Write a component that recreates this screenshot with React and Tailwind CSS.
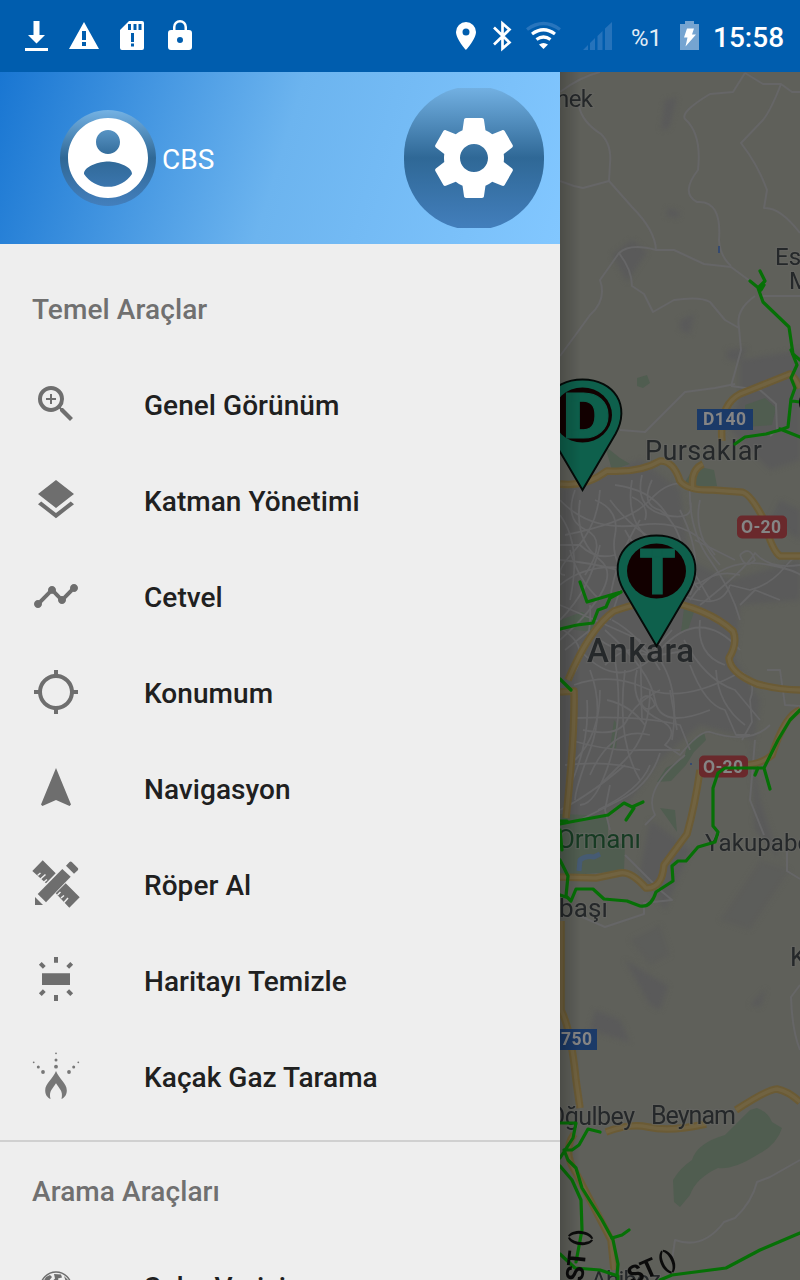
import { MdZoomIn, MdLayers, MdTimeline, MdLocationSearching, MdNavigation } from "react-icons/md";

const StatusIcon = ({ box, className, children }) => (
  <svg viewBox={box} className={"shrink-0 fill-white " + className}>{children}</svg>
);

function StatusBar() {
  return (
    <header className="flex h-[72px] shrink-0 items-center bg-[#005dae] pl-3 text-white">
      <StatusIcon box="12 12 48 48" className="size-12">
        <path d="M33.500 21h6v14h5.500L36.500 43.500 28 35h5.500zM25 48h23v3H25z" />
      </StatusIcon>
      <StatusIcon box="60 12 48 48" className="size-12">
        <path fillRule="evenodd" d="M84 22l15 27H69zM82 31v9h4v-9zM82 42v4h4v-4z" />
      </StatusIcon>
      <StatusIcon box="108 12 48 48" className="size-12">
        <path fillRule="evenodd" d="M129 21h13q2 0 2 2v25q0 2-2 2h-20q-2 0-2-2V30zM128 24v6h3v-6zM133.500 24v6h3v-6zM138.500 24v6h3v-6zM131 33v9h3v-9zM131 43.500v3h3v-3z" />
      </StatusIcon>
      <StatusIcon box="156 12 48 48" className="size-12">
        <path fillRule="evenodd" d="M173 30v-3a7 7 0 0 1 14 0v3h2q3 0 3 3v14q0 3-3 3h-18q-3 0-3-3V33q0-3 3-3zM175.500 30h9v-3a4.500 4.500 0 0 0-9 0zM180 37a3 3 0 1 0 0 6 3 3 0 0 0 0-6z" />
      </StatusIcon>
      <div className="ml-auto flex items-center">
        <StatusIcon box="448 18 36 36" className="size-9">
          <path fillRule="evenodd" d="M466 22a10 10 0 0 1 10 10c0 7-10 18-10 18s-10-11-10-18a10 10 0 0 1 10-10zM466 28.500a3.500 3.500 0 1 0 0 7 3.500 3.500 0 0 0 0-7z" />
        </StatusIcon>
        <StatusIcon box="484 18 36 36" className="size-9">
          <path d="M494 27.500l15.500 15-7 6V23.500l7 6-15.500 15" fill="none" stroke="white" strokeWidth="2.700" />
        </StatusIcon>
        <StatusIcon box="520 12 48 48" className="size-12">
          <g fill="none" strokeWidth="3.300">
            <path d="M527 29.500q16.500-12 33 0" stroke="#2875bd" />
            <path d="M532 34q11.500-8.500 23 0M536.500 39.500q7-5 14 0" stroke="white" />
          </g>
          <path d="M539 44.500q4.500-3 9 0l-4.500 4.500z" />
        </StatusIcon>
        <StatusIcon box="568 12 60 48" className="h-12 w-[60px]">
          <path d="M583 50l5-5v5zM590 43l5-5v12h-5zM597.500 36l5-5v19h-5zM605 28.500l7-6.500v28h-7z" fill="#2673bb" />
        </StatusIcon>
        <span className="w-[43px] pt-[3px] pl-[3px] text-2xl font-normal text-[#e2edf6]">%1</span>
        <StatusIcon box="671 18 36 36" className="size-9">
          <path d="M680 24h5v-3h9v3h5v26h-19z" fill="#75a4d1" />
          <path d="M687 28.500h7l-2 6h4L685.500 46.500l2-9H684z" />
        </StatusIcon>
        <span className="w-[93px] pt-[3px] pl-1.5 text-[28px] font-medium">15:58</span>
      </div>
    </header>
  );
}

function Profile() {
  return (
    <div className="flex h-[172px] items-center bg-[linear-gradient(107deg,#1976d2_0%,#6cb4ef_50%,#82c7ff_100%)] pr-4 pl-[60px]">
      <div className="size-24 rounded-full bg-[linear-gradient(180deg,#74b2e4,#2f6896_50%,#437fbd)]">
        <svg viewBox="0 0 24 24" className="size-24 fill-white">
          <path d="M12 2C6.480 2 2 6.480 2 12s4.480 10 10 10 10-4.480 10-10S17.520 2 12 2zm0 3c1.660 0 3 1.340 3 3s-1.340 3-3 3-3-1.340-3-3 1.340-3 3-3zm0 14.200c-2.500 0-4.710-1.280-6-3.220.030-1.990 4-3.080 6-3.080 1.990 0 5.970 1.090 6 3.080-1.290 1.940-3.500 3.220-6 3.220z" />
        </svg>
      </div>
      <span className="ml-1.5 pt-1 text-[28px] font-normal text-white">CBS</span>
      <div className="ml-auto h-[140px] w-[140px] overflow-hidden">
        <div className="-mt-0.5 flex h-36 w-[140px] items-center justify-center rounded-full bg-[linear-gradient(180deg,#74b2e4,#2f6896_50%,#437fbd)]">
          <svg viewBox="0 0 24 24" className="size-24 fill-white">
            <path d="M19.430 12.980c.040-.320.070-.640.070-.980s-.030-.660-.070-.980l2.110-1.650c.190-.150.240-.420.120-.640l-2-3.460c-.120-.220-.390-.300-.610-.220l-2.490 1c-.520-.400-1.080-.730-1.690-.980l-.380-2.650C14.460 2.180 14.250 2 14 2h-4c-.250 0-.460.180-.490.420l-.380 2.650c-.610.250-1.170.590-1.690.980l-2.490-1c-.230-.090-.490 0-.610.220l-2 3.460c-.130.220-.070.490.120.640l2.110 1.650c-.040.320-.070.650-.070.980s.030.660.070.980l-2.110 1.650c-.190.150-.240.420-.120.640l2 3.460c.120.220.390.300.610.220l2.490-1c.520.400 1.080.730 1.690.980l.380 2.650c.030.240.240.420.490.420h4c.250 0 .460-.180.490-.420l.380-2.650c.610-.250 1.170-.590 1.690-.980l2.490 1c.230.090.490 0 .610-.220l2-3.460c.120-.220.070-.490-.120-.640l-2.110-1.650zM12 15.500c-1.930 0-3.500-1.570-3.500-3.500s1.570-3.500 3.500-3.500 3.500 1.570 3.500 3.500-1.570 3.500-3.500 3.500z" />
          </svg>
        </div>
      </div>
    </div>
  );
}

const PencilRuler = () => (
  <svg viewBox="32 860 48 48" className="size-12 fill-current">
    <path d="M32.300 871L42.700 860.300 55.700 873.300 46 883.300zM65.700 883.300L79.700 897.300 69.300 907.700 55.700 893.300z" />
    <path d="M37.500 875.500l3-2.500M40.500 879l5-4.500M44 882l3-2.500M57.500 895l3-3M61 898l3-2.500M64 902.500l4-4.500" stroke="#eee" strokeWidth="1.500" />
    <path d="M62.300 869L70.700 876.700 46 902.300 37.700 894z" />
    <path d="M66 865.700L69.500 862q1.200-1 2.300 0L77.800 868q1 1 0 2.200L74 873.700zM35 897v8h8z" />
  </svg>
);

const ClearMap = () => (
  <svg viewBox="32 956 48 48" className="size-12 fill-current">
    <path d="M42 973.300h28V985H42zM54 957h4v5.800h-4zM54 995h4v6h-4z" />
    <path d="M40.300 963.300l4 4M71.700 963.300l-4 4M40.300 994.700l4-4M71.700 994.700l-4-4" stroke="currentColor" strokeWidth="4" />
  </svg>
);

const GasLeak = () => (
  <svg viewBox="32 1052 48 48" className="size-12 fill-[#777]">
    <path d="M56 1071C53 1079 45.200 1083 45.200 1090.500 45.200 1095 47.500 1097.500 50.500 1099 48.500 1091 53 1088.500 56 1083.300 59 1088.500 63.500 1091 61.500 1099 64.500 1097.500 66.800 1095 66.800 1090.500 66.800 1083 59 1079 56 1071z" />
    <circle cx="56" cy="1066.700" r="1.900" /><circle cx="56" cy="1060" r="1.500" /><circle cx="56" cy="1053.300" r=".9" />
    <circle cx="43" cy="1072" r="1.900" /><circle cx="38.300" cy="1067" r="1.500" /><circle cx="33.700" cy="1062.300" r=".9" />
    <circle cx="69" cy="1072" r="1.900" /><circle cx="73.700" cy="1067" r="1.500" /><circle cx="78.300" cy="1062.300" r=".9" />
  </svg>
);

const Globe = () => (
  <svg viewBox="0 0 48 48" className="size-12">
    <circle cx="24" cy="25.500" r="15.500" fill="none" stroke="currentColor" strokeWidth="1.500" />
    <path d="M11 20l3-5 4-2 2 2-4 5-4 2zM22 12l7 .5 1 3-4 1 1 4-5 7-5-3 3-5 3-3zM32 14l5 5 1 5-4-4z" fill="currentColor" />
  </svg>
);

const tools = [
  ["Genel Görünüm", MdZoomIn],
  ["Katman Yönetimi", MdLayers],
  ["Cetvel", MdTimeline],
  ["Konumum", MdLocationSearching],
  ["Navigasyon", MdNavigation],
  ["Röper Al", PencilRuler],
  ["Haritayı Temizle", ClearMap],
  ["Kaçak Gaz Tarama", GasLeak],
];

const MenuItem = ({ label, icon: Icon }) => (
  <li className="flex h-24 shrink-0 items-center gap-16 px-8 text-[#6e6e6e]">
    <Icon className="size-12" />
    <span className="pt-[3px] text-[28px] font-medium tracking-[0.05px] text-[#202020]">{label}</span>
  </li>
);

const Heading = ({ children }) => (
  <h2 className="flex h-24 items-center px-8 pt-1 text-[28px] font-medium tracking-[0.1px] text-[#707070]">{children}</h2>
);

const yellowRoads = [
  "M560 484Q586 487 607 471 640 473 660 461 673 460 680 481 688 491 713 490L740 492Q749 491 763 518 772 551 780 556H800",
  "M693 490Q690 470 703 464M722 441Q719 405 740 394L790 374Q796 378 800 388",
  "M568 680Q590 628 614 611 640 602 660 600 708 608 733 631 738 643 729 658 730 673 757 684 780 690 800 690",
  "M560 692L574 691Q575 735 566 818",
  "M800 710Q785 715 772 755 762 764 745 765M700 770Q695 805 687 834L664 865Q662 889 646 888 631 871 620 873L596 878 560 877",
  "M561 921V1010Q571 1030 576 1080L580 1108",
  "M606 1132Q630 1123 648 1127 670 1132 706 1124M736 1110Q768 1089 777 1089 788 1091 800 1102",
  "M574 1134Q562 1152 576 1173L611 1240 614 1270",
];

const countryRoads = [
  "M560 92Q580 77 600 72M579 106Q582 122 601 134 612 145 610 164L609 181 632 207Q655 230 656 250M560 181L574 186 583 188 609 181",
  "M560 356Q580 329 590 315 607 300 600 280L619 253Q630 243 656 250L674 250 704 264 731 267 750 281",
  "M619 253Q632 270 632 286L644 294 653 312 674 300Q700 296 710 302L725 320 739 328Q735 310 755 296",
  "M745 73L733 92 710 94Q680 112 685 119 702 134 698 170 680 193 697 202 722 200 719 240 720 256 731 266",
  "M745 73L763 84 781 84Q771 110 763 120L741 143Q758 165 767 190L764 208Q780 207 800 233M781 84L792 92 800 92",
  "M761 296H800M739 328L741 350 735 372 731 386M620 430L645 432 685 392 715 388 735 384M731 386L760 390 776 404 777 430 770 436",
  "M625 855L660 890 672 900 644 903 644 914 605 927 580 916M755 740L750 800 764 835M787 850V871L800 879",
  "M800 985L791 997Q792 1030 800 1050M800 1160L770 1177 757 1182Q752 1202 735 1218L724 1222Q703 1250 675 1240L672 1260",
];

const cityStreets = [
  "M560 500Q590 532 640 525T715 555M565 535Q630 522 650 500T690 485M560 560Q620 565 670 590T730 585",
  "M580 500Q574 540 600 560T560 640M600 490Q598 525 575 550T565 575M632 480Q625 520 650 540T660 570M642 475Q634 508 665 515T690 500",
  "M615 485Q655 490 670 520M652 480Q640 505 660 510 680 525 685 560M690 485Q688 530 710 560T740 620",
  "M560 585Q590 560 640 570M560 605Q600 622 640 640M690 600Q720 555 770 565T800 590M700 605Q745 570 755 553 770 570 800 565",
  "M730 585L750 590Q770 585 785 567T800 560M640 520Q615 560 610 600M570 550Q578 580 600 600M670 540Q688 560 710 600M695 540L735 560",
  "M580 650Q620 695 660 650T740 650M605 630Q650 670 655 700T710 710M590 670Q605 710 590 750T575 800M615 660Q624 715 610 760T580 805",
  "M574 685Q610 672 645 688T735 675M576 718Q640 715 680 725L690 750M570 740Q610 752 640 750H680M565 765Q610 760 640 770",
  "M637 670Q628 705 660 720 680 730 665 745L680 755Q700 730 710 732 750 745 770 725M650 690Q650 735 625 760L600 785M670 690L677 730",
  "M690 665Q705 705 725 710L736 735 750 735M716 670Q718 705 745 725M738 670Q758 680 750 700L752 722 742 740M767 670L780 670 785 705 800 706",
  "M660 753Q650 785 620 800L580 820M560 810Q590 795 625 765M685 755Q642 790 655 815L645 825M610 785L605 810 610 830",
  "M600 640Q620 655 660 655L690 650M612 620Q640 635 660 670M605 665Q630 640 650 655L672 630M700 620Q696 655 725 665M640 640L642 720",
  "M625 670Q616 740 640 780M660 660Q680 690 672 740M600 690Q600 735 575 760M587 700Q590 745 568 790M560 515Q582 545 570 600",
  "M610 500Q640 540 680 550M600 545Q590 590 560 620M625 530Q640 560 670 560M650 545L690 580M680 510Q705 560 690 595M700 500Q692 535 720 565",
  "M640 700Q645 715 655 705 650 690 640 700M740 555Q750 545 755 560 745 570 740 555M620 590L610 620M590 605Q592 635 580 660",
  "M575 490Q564 520 586 530T585 575M560 545H580Q595 560 615 555M595 500Q620 510 615 535T630 580M620 555L650 580 668 600M632 497Q650 505 645 520",
  "M590 775Q612 725 650 735M598 810Q640 790 650 765M583 730Q618 738 627 720T660 690M607 700Q630 705 645 725M684 640Q705 680 735 690L760 720",
  "M670 575Q690 590 705 580T740 575M672 560L700 590M560 628Q590 645 575 672M565 650L590 630M740 605L755 590 780 600",
];

const pipelines = [
  "M750 281L761 290 764 285M760 271L765 281 758 288 763 302 789 327 793 354 800 360",
  "M791 350L797 365 791 378 795 388 791 399 788 427 780 430 766 434 745 437 735 444M792 401L800 402M780 429L800 437",
  "M580 582L587 602 621 592M621 592L610 598 606 607 598 610 593 623 577 625 560 629M560 679L571 690",
  "M560 824L570 822 608 815 624 803 632 807 643 802M626 820L634 808",
  "M560 860L568 876 566 896 571 901 576 889 593 889 604 899 627 901 640 906Q651 908 656 892L673 881 672 866 678 861 686 861 698 847 715 842 718 832 713 826V788L718 773 725 768H757L764 768 770 789M758 768L755 775M764 768L778 740 790 720 800 710",
  "M560 821L567 821M560 830L562 850M560 895L566 897",
  "M560 1123L576 1123 573 1138 560 1158M600 1132L588 1129 579 1145 572 1150 564 1150M564 1150L568 1160 576 1168 582 1188 602 1220 613 1240 618 1264 617 1275",
  "M560 1166L572 1180 581 1200 582 1230 576 1262M612 1238L622 1235 629 1230M560 1254L575 1268 600 1270 618 1276 618 1280M660 1280L672 1275 726 1268 760 1250 800 1233",
];

const MapLabel = (props) => (
  <text fill="#25282a" stroke="#696966" strokeWidth="2.500" strokeOpacity=".45" paintOrder="stroke" {...props} />
);

function Pin({ x, y, letter, width, shift = 0 }) {
  return (
    <g transform={`translate(${x} ${y})`}>
      <path d="M0 111L-34 55C-50 27-33 .5 0 .5S50 27 34 55z" transform="scale(.97 1)" fill="#0e604c" stroke="#050b09" strokeWidth="2" />
      <ellipse cy="36" rx="29.500" ry="27.500" fill="#120000" />
      <text x={shift - width / 2} y="59" fontSize="63" fontWeight="900" textLength={width} lengthAdjust="spacingAndGlyphs" fill="#0e604c" stroke="#0e604c" strokeWidth="1" className="font-[Roboto,sans-serif]">{letter}</text>
    </g>
  );
}

function MapView() {
  return (
    <main className="h-[1208px] w-60 shrink-0 overflow-hidden bg-[#5f605a]">
      <svg viewBox="560 72 240 1208" className="h-[1208px] w-60 font-[Roboto,sans-serif]">
        <defs>
          <linearGradient id="edge" x1="0" x2="1" y1="0" y2="0">
            <stop offset="0" stopColor="#000" stopOpacity=".2" />
            <stop offset="1" stopColor="#000" stopOpacity="0" />
          </linearGradient>
          <filter id="soft" colorInterpolationFilters="sRGB"><feGaussianBlur stdDeviation=".6" /></filter>
          <filter id="haze" colorInterpolationFilters="sRGB"><feGaussianBlur stdDeviation="2.500" /></filter>
        </defs>
        <g fill="#5a5a5a" filter="url(#haze)">
          <path d="M560 490L640 460 680 490 690 560 730 580 800 560V600L740 605 735 660 760 700 755 740 700 725 660 760 630 800 560 840z" />
          <path d="M740 360L800 350V460L770 470 730 430 740 395zM780 500L800 510V540L770 520zM650 820L690 850 665 910 640 870z" />
          <path d="M612 255l20-15 15 12-20 30zM665 100l12-2-8 30-8 2zM680 320l14-6-4 20-10-4zM668 208l12 4-2 6-12-2zM727 350l20-2-8 14-12-3z" />
          <path d="M625 960L668 986 660 1010 650 1005zM595 1010L620 1020 630 1042 590 1030zM750 1005l16-16-6 18zM750 730L760 800 780 860 755 830z" />
          <path d="M790 870L760 860 720 920 750 930zM630 940l30-15 10 30-20 10z" opacity=".5" />
        </g>
        <g fill="#505d50" filter="url(#soft)">
          <path d="M560 814L608 816V840L625 845 624 871 560 876zM560 620L582 612 595 620 592 632 560 628z" />
          <path d="M688 743L704 732 706 740 694 752 686 765 671 781 657 782 666 768 684 758zM660 808l15 2 2 22zM614 720l4 5-2 25-6-2z" />
          <path d="M637 378l10-3 3 8-7 5-6-2zM745 405L765 398 776 408 772 425 745 427zM605 446L620 458 630 464 612 470zM695 466L714 470 717 486 698 488 685 482zM684 608l10 4-6 18-7 2z" />
          <path d="M757 1108Q768 1112 772 1122L782 1128Q777 1145 757 1155 733 1170 718 1168 696 1178 690 1195L680 1207 674 1202 673 1180Q680 1168 692 1160 697 1143 725 1135 740 1120 750 1110z" />
        </g>
        <path d="M579 871L580 860Q586 855 594 857L600 854" fill="none" stroke="#465b73" strokeWidth="5" strokeLinejoin="round" filter="url(#soft)" />
        <g fill="none" stroke="#666667" filter="url(#soft)" strokeLinejoin="round">
          {countryRoads.map((d) => <path key={d} d={d} strokeWidth="2" />)}
          {cityStreets.map((d) => <path key={d} d={d} strokeWidth="1.800" />)}
        </g>
        <g fill="none" strokeLinejoin="round" filter="url(#soft)">
          {yellowRoads.map((d) => <path key={d} d={d} stroke="#6b5b35" strokeWidth="7.500" />)}
          {yellowRoads.map((d) => <path key={d} d={d} stroke="#716341" strokeWidth="3.500" />)}
        </g>
        <path d="M719 246v7M690 764h2" stroke="#354a70" strokeWidth="2" filter="url(#soft)" />
        <g filter="url(#soft)">
          <path d="M697 409h56v21h-56zM560 1029h37v21h-37z" fill="#1b3a68" />
          <rect x="737" y="515.500" width="50" height="23" rx="5" fill="#6a292c" />
          <rect x="699" y="755.500" width="49" height="22" rx="5" fill="#6a292c" />
        </g>
        <g fontSize="17.500" fontWeight="700" fill="#858585" filter="url(#soft)">
          <text x="703" y="425" textLength="43">D140</text>
          <text x="741" y="533" textLength="40">O-20</text>
          <text x="703" y="773" textLength="40">O-20</text>
          <text x="561" y="1045" textLength="31">750</text>
        </g>
        <g filter="url(#soft)">
          <MapLabel x="556" y="107" fontSize="24" textLength="37">nek</MapLabel>
          <MapLabel x="775" y="265" fontSize="24">Es</MapLabel>
          <MapLabel x="789" y="289" fontSize="24">M</MapLabel>
          <MapLabel x="645" y="460" fontSize="27" textLength="117">Pursaklar</MapLabel>
          <MapLabel x="587" y="662" fontSize="33" fontWeight="500" textLength="107">Ankara</MapLabel>
          <MapLabel x="557" y="848" fontSize="26" fill="#173b23" textLength="84">Ormanı</MapLabel>
          <MapLabel x="705" y="851" fontSize="24" textLength="106">Yakupabd</MapLabel>
          <MapLabel x="559" y="917" fontSize="26" textLength="49">başı</MapLabel>
          <MapLabel x="790" y="966" fontSize="26">K</MapLabel>
          <MapLabel x="548" y="1125" fontSize="25" textLength="87">Oğulbey</MapLabel>
          <MapLabel x="651" y="1124" fontSize="25" textLength="85">Beynam</MapLabel>
          <MapLabel x="591" y="1288" fontSize="24" textLength="70">Ahiboz</MapLabel>
        </g>
        <g fill="none" stroke="#067006" strokeWidth="3.200" strokeLinejoin="round" strokeLinecap="round" filter="url(#soft)">
          {pipelines.map((d) => <path key={d} d={d} />)}
        </g>
        <g fontSize="25" fontWeight="700" fill="#0b0b0b" filter="url(#soft)">
          <text transform="translate(583 1282) rotate(-84)" textLength="52">ST ()</text>
          <text transform="translate(632 1285) rotate(-24)" textLength="50">ST ()</text>
          <text x="798" y="412">C</text>
        </g>
        <Pin x={582.500} y={379} letter="D" width={48} shift={4} />
        <Pin x={656.500} y={535} letter="T" width={36} shift={1} />
        <rect x="560" y="72" width="20" height="1208" fill="url(#edge)" />
      </svg>
    </main>
  );
}

export default function App() {
  return (
    <div className="flex h-[1280px] w-[800px] flex-col overflow-hidden bg-[#eee] font-[Roboto,sans-serif] leading-none">
      <StatusBar />
      <div className="flex min-h-0 flex-1">
        <aside className="h-[1208px] w-[560px] shrink-0 overflow-hidden bg-[#eee]">
          <Profile />
          <div className="pt-4">
            <Heading>Temel Araçlar</Heading>
            <ul>{tools.map(([label, icon]) => <MenuItem key={label} label={label} icon={icon} />)}</ul>
          </div>
          <div className="mt-4 border-t-2 border-[#d0d0d0]">
            <Heading>Arama Araçları</Heading>
            <ul><MenuItem label="Şube Verisi" icon={Globe} /></ul>
          </div>
        </aside>
        <MapView />
      </div>
    </div>
  );
}
